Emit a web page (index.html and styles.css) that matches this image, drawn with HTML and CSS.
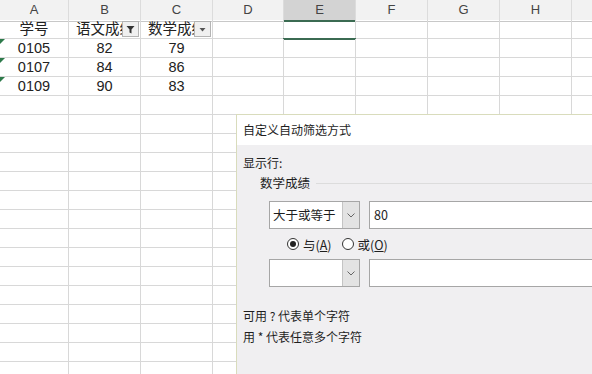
FILE: index.html
```html
<!DOCTYPE html>
<html lang="zh-CN">
<head>
    <meta charset="UTF-8">
    <meta name="viewport" content="width=device-width, initial-scale=1.0">
    <title>自定义自动筛选方式</title>
    <link rel="stylesheet" href="styles.css">
</head>
<body>

    <!-- Sheet -->
    <div class="sheet" id="sheet">
        <div class="row head">
            <div>A</div><div>B</div><div>C</div><div>D</div>
            <div class="active">E</div><div>F</div><div>G</div><div>H</div><div></div>
        </div>
        <div class="row">
            <div class="cell">学号</div>
            <div class="cell has-filter">语文成绩
                <span class="filter-btn">
                    <svg width="9" height="9" viewBox="0 0 9 9"><path d="M0.5 1h8L5.5 4.6V8.5L3.5 7.4V4.6Z" fill="#333"/></svg>
                </span>
            </div>
            <div class="cell has-filter">数学成绩
                <span class="filter-btn">
                    <svg width="9" height="9" viewBox="0 0 9 9"><path d="M1.5 3h6L4.5 6.5Z" fill="#555"/></svg>
                </span>
            </div>
            <div></div><div class="selected"></div><div></div><div></div><div></div><div></div>
        </div>
        <div class="row">
            <div class="cell flag">0105</div><div class="cell">82</div><div class="cell">79</div>
            <div></div><div></div><div></div><div></div><div></div><div></div>
        </div>
        <div class="row">
            <div class="cell flag">0107</div><div class="cell">84</div><div class="cell">86</div>
            <div></div><div></div><div></div><div></div><div></div><div></div>
        </div>
        <div class="row">
            <div class="cell flag">0109</div><div class="cell">90</div><div class="cell">83</div>
            <div></div><div></div><div></div><div></div><div></div><div></div>
        </div>
    </div>

    <!-- Dialog -->
    <div class="dialog">
        <div class="dialog-title">自定义自动筛选方式</div>
        <div class="dialog-body">
            <p class="label">显示行:</p>
            <div class="group-title"><span>数学成绩</span></div>

            <div class="cond-row first">
                <div class="combo">
                    <span class="combo-text">大于或等于</span>
                    <span class="combo-btn">
                        <svg width="8" height="5" viewBox="0 0 8 5"><path d="M0.5 0.5L4 4L7.5 0.5" fill="none" stroke="#666" stroke-width="1"/></svg>
                    </span>
                </div>
                <div class="value">80</div>
            </div>

            <div class="radio-row">
                <span class="radio checked"></span><span>与(<u>A</u>)</span>
                <span class="radio"></span><span>或(<u>O</u>)</span>
            </div>

            <div class="cond-row">
                <div class="combo">
                    <span class="combo-text"></span>
                    <span class="combo-btn">
                        <svg width="8" height="5" viewBox="0 0 8 5"><path d="M0.5 0.5L4 4L7.5 0.5" fill="none" stroke="#666" stroke-width="1"/></svg>
                    </span>
                </div>
                <div class="value"></div>
            </div>

            <div class="hints">
                <p>可用 ? 代表单个字符</p>
                <p>用 * 代表任意多个字符</p>
            </div>
        </div>
    </div>

    <script>
        // fill the rest of the sheet with empty rows
        let sheet = document.getElementById("sheet");
        for (let r = 0; r < 15; r++) {
            let row = document.createElement("div");
            row.className = "row";
            for (let c = 0; c < 9; c++) {
                row.appendChild(document.createElement("div"));
            }
            sheet.appendChild(row);
        }
    </script>

</body>
</html>
```

FILE: styles.css
```css
* {
    margin: 0;
    padding: 0;
    box-sizing: border-box;
}
body {
    background: #fff;
    color: #222;
    font-family: "Liberation Sans", "Noto Sans CJK SC", sans-serif;
    overflow: hidden;
    position: relative;
    width: 592px;
    height: 374px;
}
/* Sheet */
.sheet {
    width: 600px;
}
.row {
    display: grid;
    grid-template-columns: 69px 72px 72px 71px 72px 72px 72px 72px 30px;
    height: 19px;
}
.row > div {
    border-right: 1px solid #d8d8d8;
    border-bottom: 1px solid #d8d8d8;
    position: relative;
}
.row.head {
    height: 20px;
    background: #f2f2f2;
}
.row.head > div {
    color: #444;
    font-size: 13px;
    line-height: 19px;
    text-align: center;
    border-right-color: #dcdcdc;
    border-bottom-color: #c8c8c8;
}
.row.head > div.active {
    background: #d3d3d3;
    border-bottom: 2px solid #3b6b52;
    line-height: 20px;
}
.cell {
    font-size: 14.5px;
    line-height: 18px;
    text-align: center;
    color: #222;
    white-space: nowrap;
    overflow: hidden;
}
.has-filter {
    text-align: left;
    padding-left: 7px;
}
.filter-btn {
    position: absolute;
    right: 1px;
    top: 1px;
    width: 17px;
    height: 16px;
    background: #f0f0f0;
    border: 1px solid #b4b4b4;
    display: flex;
    align-items: center;
    justify-content: center;
}
.flag::before {
    content: "";
    position: absolute;
    left: 0;
    top: 0;
    border-top: 5px solid #2d7a4a;
    border-right: 5px solid transparent;
}
.selected::after {
    content: "";
    position: absolute;
    left: -1px;
    right: -1px;
    top: -1px;
    bottom: -2px;
    border-bottom: 2px solid #3b6b52;
}
/* Dialog */
.dialog {
    position: absolute;
    left: 236px;
    top: 114px;
    width: 400px;
    height: 300px;
    border: 1px solid #d9dcbc;
    background: #f0eff1;
    font-family: "Noto Sans CJK SC", sans-serif;
    font-size: 12px;
    color: #1e1e1e;
}
.dialog-title {
    height: 30px;
    line-height: 30px;
    background: #fff;
    padding-left: 6px;
}
.dialog-body {
    padding: 10px 0 0 6px;
}
.label {
    line-height: 16px;
}
.group-title {
    display: flex;
    align-items: center;
    margin: 4px 0 0 17px;
    line-height: 16px;
    font-size: 12.5px;
}
.group-title::after {
    content: "";
    flex: 1;
    height: 1px;
    background: #dcdcdc;
    margin-left: 6px;
}
.cond-row {
    display: flex;
    gap: 9px;
    margin-left: 26px;
    height: 28px;
}
.cond-row.first {
    margin-top: 10px;
}
.combo {
    width: 91px;
    display: flex;
    background: #fff;
    border: 1px solid #a6a6a6;
}
.combo-text {
    flex: 1;
    padding-left: 3px;
    line-height: 25px;
    font-size: 12.5px;
}
.combo-btn {
    width: 17px;
    background: #e3e3e3;
    border-left: 1px solid #c4c4c4;
    display: flex;
    align-items: center;
    justify-content: center;
}
.value {
    flex: 1;
    background: #fff;
    border: 1px solid #a6a6a6;
    padding-left: 4px;
    line-height: 25px;
    font-size: 12.5px;
}
.radio-row {
    display: flex;
    align-items: center;
    height: 30px;
    margin-left: 44px;
    font-size: 12.5px;
    gap: 4px;
}
.radio {
    width: 12px;
    height: 12px;
    border: 1px solid #333;
    border-radius: 50%;
    background: #fff;
    position: relative;
}
.radio + span {
    margin-right: 6px;
}
.radio.checked::after {
    content: "";
    position: absolute;
    left: 2px;
    top: 2px;
    width: 6px;
    height: 6px;
    border-radius: 50%;
    background: #222;
}
.hints {
    margin-top: 18px;
}
.hints p {
    line-height: 21px;
}
```
